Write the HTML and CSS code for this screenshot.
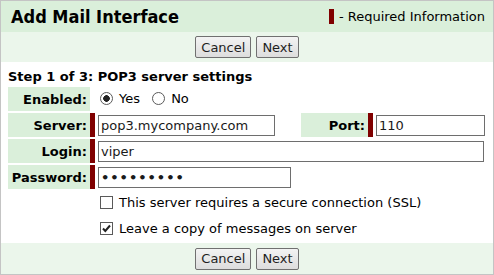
FILE: index.html
```html
<!DOCTYPE html>
<html lang="en">

<head>
    <title>Add Mail Interface</title>
    <link rel="stylesheet" href="styles.css">
</head>

<body>
    <div class="panel">
        <div class="header">
            <h1>Add Mail Interface</h1>
            <div class="legend"><span class="req-bar"></span>- Required Information</div>
        </div>

        <div class="toolbar">
            <button type="button">Cancel</button>
            <button type="button">Next</button>
        </div>

        <div class="content">
            <div class="step">Step 1 of 3: POP3 server settings</div>
            <table class="form">
                <tr>
                    <td class="label">Enabled:</td>
                    <td class="value" colspan="3">
                        <label class="choice"><input type="radio" name="enabled" checked> Yes</label>
                        <label class="choice"><input type="radio" name="enabled"> No</label>
                    </td>
                </tr>
                <tr>
                    <td class="label">Server:</td>
                    <td class="value required server-cell"><input type="text" class="server-input" value="pop3.mycompany.com"></td>
                    <td class="label port-label">Port:</td>
                    <td class="value required"><input type="text" class="port-input" value="110"></td>
                </tr>
                <tr>
                    <td class="label">Login:</td>
                    <td class="value required" colspan="3"><input type="text" class="login-input" value="viper"></td>
                </tr>
                <tr>
                    <td class="label">Password:</td>
                    <td class="value required" colspan="3"><input type="password" class="password-input" value="123456789"></td>
                </tr>
                <tr>
                    <td></td>
                    <td class="value option" colspan="3">
                        <label class="choice"><input type="checkbox"> This server requires a secure connection (SSL)</label>
                    </td>
                </tr>
                <tr>
                    <td></td>
                    <td class="value option" colspan="3">
                        <label class="choice"><input type="checkbox" checked> Leave a copy of messages on server</label>
                    </td>
                </tr>
            </table>
        </div>

        <div class="toolbar">
            <button type="button">Cancel</button>
            <button type="button">Next</button>
        </div>
    </div>
</body>

</html>
```

FILE: styles.css
```css
body {
    margin: 0;
    font-family: 'DejaVu Sans', Verdana, sans-serif;
    font-size: 13px;
    color: #000;
    background: #fff;
}

.panel {
    width: 492px;
    height: 273px;
    border: 1px solid #c4c4c4;
    display: flex;
    flex-direction: column;
}

.header {
    height: 31px;
    background-color: #daefda;
    display: flex;
    align-items: center;
    justify-content: space-between;
    padding: 0 8px 0 10px;
}

h1 {
    margin: 0;
    font-family: 'DejaVu Sans Condensed', 'DejaVu Sans', sans-serif;
    font-size: 18px;
    font-weight: bold;
    color: #000;
}

.legend {
    display: flex;
    align-items: center;
}

.req-bar {
    display: inline-block;
    width: 5px;
    height: 15px;
    background-color: #800000;
    margin-right: 5px;
}

.toolbar {
    height: 30px;
    background-color: #ebf6eb;
    display: flex;
    justify-content: center;
    align-items: center;
    gap: 5px;
}

.toolbar:last-child {
    flex: 1;
}

button {
    font-family: 'DejaVu Sans', Verdana, sans-serif;
    font-size: 13px;
    color: #1e1e1e;
    height: 22px;
    padding: 0 5px;
    border: 1px solid #707070;
    border-radius: 2px;
    background: linear-gradient(#f3f3f3, #dddddd);
}

.content {
    padding: 7px 0 0 7px;
}

.step {
    font-weight: bold;
    line-height: 16px;
}

.form {
    border-collapse: separate;
    border-spacing: 0 2px;
}

.form td {
    padding: 0;
    height: 24px;
}

.label {
    width: 79px;
    background-color: #daefda;
    font-weight: bold;
    text-align: right;
    padding-right: 3px !important;
}

.port-label {
    width: 64px;
}

.value {
    border-left: 5px solid transparent;
    padding-left: 3px !important;
}

.value.required {
    border-left-color: #800000;
}

.server-cell {
    width: 203px;
}

input[type="text"],
input[type="password"] {
    font-family: 'DejaVu Sans', Verdana, sans-serif;
    font-size: 13px;
    color: #1a1a1a;
    height: 21px;
    box-sizing: border-box;
    border: 1px solid #6e6e6e;
    padding: 0 2px;
    margin: 0;
    display: block;
}

.server-input {
    width: 177px;
}

.port-input {
    width: 109px;
}

.login-input {
    width: 386px;
}

.password-input {
    width: 193px;
    font-weight: bold;
    letter-spacing: 1px;
}

.choice {
    display: inline-flex;
    align-items: center;
    gap: 6px;
    margin-right: 6px;
}

input[type="radio"],
input[type="checkbox"] {
    appearance: none;
    width: 13px;
    height: 13px;
    margin: 0 0 0 2px;
    border: 1px solid #5a5a5a;
    background: #fff;
}

input[type="radio"] {
    border-radius: 50%;
}

input[type="radio"]:checked {
    background: radial-gradient(circle, #222 0, #222 3px, #fff 3.6px);
}

input[type="checkbox"]:checked {
    background: #fff url("data:image/svg+xml;utf8,<svg xmlns='http://www.w3.org/2000/svg' width='11' height='11' viewBox='0 0 11 11'><path d='M2 5.5 L4.3 8 L9 2.5' fill='none' stroke='%23222' stroke-width='2'/></svg>") no-repeat center;
}
```
